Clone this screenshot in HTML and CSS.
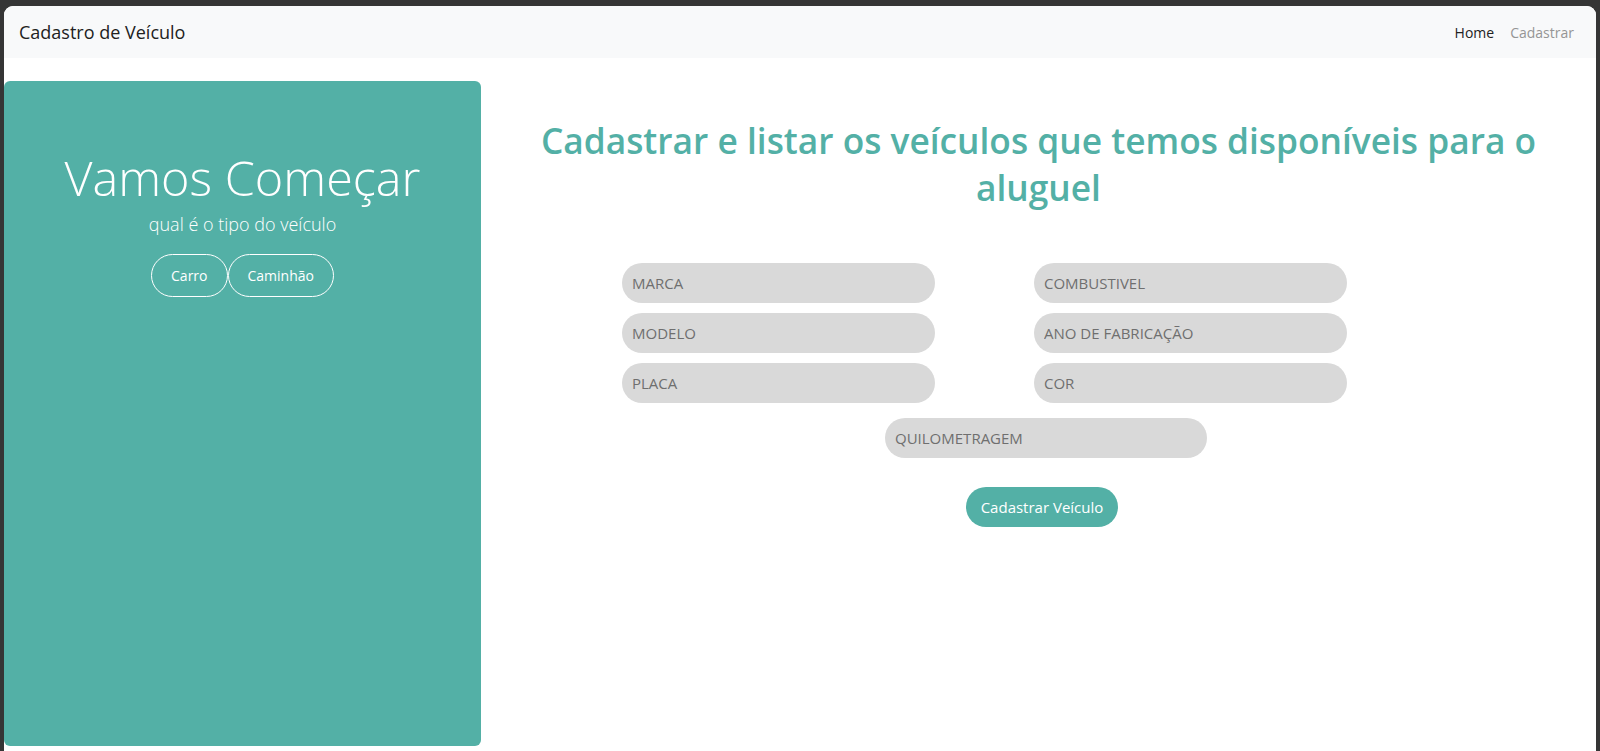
FILE: index.html
```html
<!DOCTYPE html>
<html lang="pt-BR">
<head>
<meta charset="utf-8">
<title>Cadastro de Veículo</title>
<link rel="stylesheet" href="styles.css">
</head>
<body>
<div class="window">
  <nav class="navbar">
    <span class="brand">Cadastro de Veículo</span>
    <div class="nav-links">
      <a class="nav-link active" href="#">Home</a>
      <a class="nav-link" href="#">Cadastrar</a>
    </div>
  </nav>
  <div class="main">
    <aside class="panel">
      <h2 class="panel-title">Vamos Começar</h2>
      <p class="panel-lead">qual é o tipo do veículo</p>
      <div class="type-buttons">
        <button class="btn-outline">Carro</button><button class="btn-outline">Caminhão</button>
      </div>
    </aside>
    <section class="content">
      <h1 class="title">Cadastrar e listar os veículos que temos disponíveis para o aluguel</h1>
      <div class="form-grid">
        <input class="field" placeholder="MARCA">
        <input class="field" placeholder="COMBUSTIVEL">
        <input class="field" placeholder="MODELO">
        <input class="field" placeholder="ANO DE FABRICAÇÃO">
        <input class="field" placeholder="PLACA">
        <input class="field" placeholder="COR">
      </div>
      <div class="center-row km-row">
        <input class="field field-km" placeholder="QUILOMETRAGEM">
      </div>
      <div class="center-row submit-row">
        <button class="btn-submit">Cadastrar Veículo</button>
      </div>
    </section>
  </div>
</div>
</body>
</html>
```

FILE: styles.css
```css
* { box-sizing: border-box; }

html, body {
  margin: 0;
  padding: 0;
  height: 751px;
  overflow: hidden;
}

body {
  background: #353535;
  font-family: "Open Sans", "Noto Sans", sans-serif;
  color: #212529;
}

.window {
  margin: 6px 4px 0 4px;
  height: 745px;
  background: #ffffff;
  border-radius: 9px 9px 0 0;
  overflow: hidden;
}

.navbar {
  height: 52px;
  background: #f8f9fa;
  display: flex;
  align-items: center;
  justify-content: space-between;
  padding: 0 22px 0 15px;
}

.brand {
  font-size: 18px;
  color: #212121;
}

.nav-links {
  display: flex;
  gap: 16px;
}

.nav-link {
  font-size: 14px;
  text-decoration: none;
  color: #959595;
}

.nav-link.active {
  color: #222222;
}

.main {
  display: flex;
  margin-top: 23px;
}

.panel {
  width: 477px;
  height: 665px;
  background: #53b0a6;
  border-radius: 6px;
  text-align: center;
  color: #ffffff;
  padding-top: 68px;
}

.panel-title {
  margin: 0;
  font-size: 48.5px;
  font-weight: 300;
  line-height: 56px;
}

.panel-lead {
  margin: 6px 0 0 0;
  font-size: 18px;
  line-height: 27px;
  font-weight: 300;
}

.type-buttons {
  margin-top: 16px;
  display: flex;
  justify-content: center;
}

.btn-outline {
  font-family: inherit;
  font-size: 14px;
  color: #ffffff;
  background: transparent;
  border: 1px solid #ffffff;
  border-radius: 22px;
  height: 43px;
  padding: 0 19px;
  cursor: pointer;
}

.content {
  flex: 1;
  padding-top: 36px;
}

.title {
  margin: 0 auto;
  width: 1060px;
  text-align: center;
  font-size: 35.3px;
  font-weight: 600;
  line-height: 47px;
  color: #53b0a6;
}

.form-grid {
  margin: 52px 0 0 141px;
  display: grid;
  grid-template-columns: 313px 313px;
  column-gap: 99px;
  row-gap: 10px;
}

.field {
  height: 40px;
  border: none;
  border-radius: 20px;
  background: #d9d9d9;
  padding: 0 10px;
  font-family: inherit;
  font-size: 15px;
  color: #555;
  outline: none;
}

.field::placeholder {
  color: #6f6f6f;
}

.center-row {
  display: flex;
  justify-content: center;
}

.km-row {
  margin-top: 15px;
  padding-left: 15px;
}

.field-km {
  width: 322px;
}

.submit-row {
  margin-top: 29px;
  padding-left: 7px;
}

.btn-submit {
  font-family: inherit;
  font-size: 15px;
  color: #ffffff;
  background: #53b0a6;
  border: none;
  border-radius: 20px;
  height: 40px;
  width: 152px;
  cursor: pointer;
}
```
